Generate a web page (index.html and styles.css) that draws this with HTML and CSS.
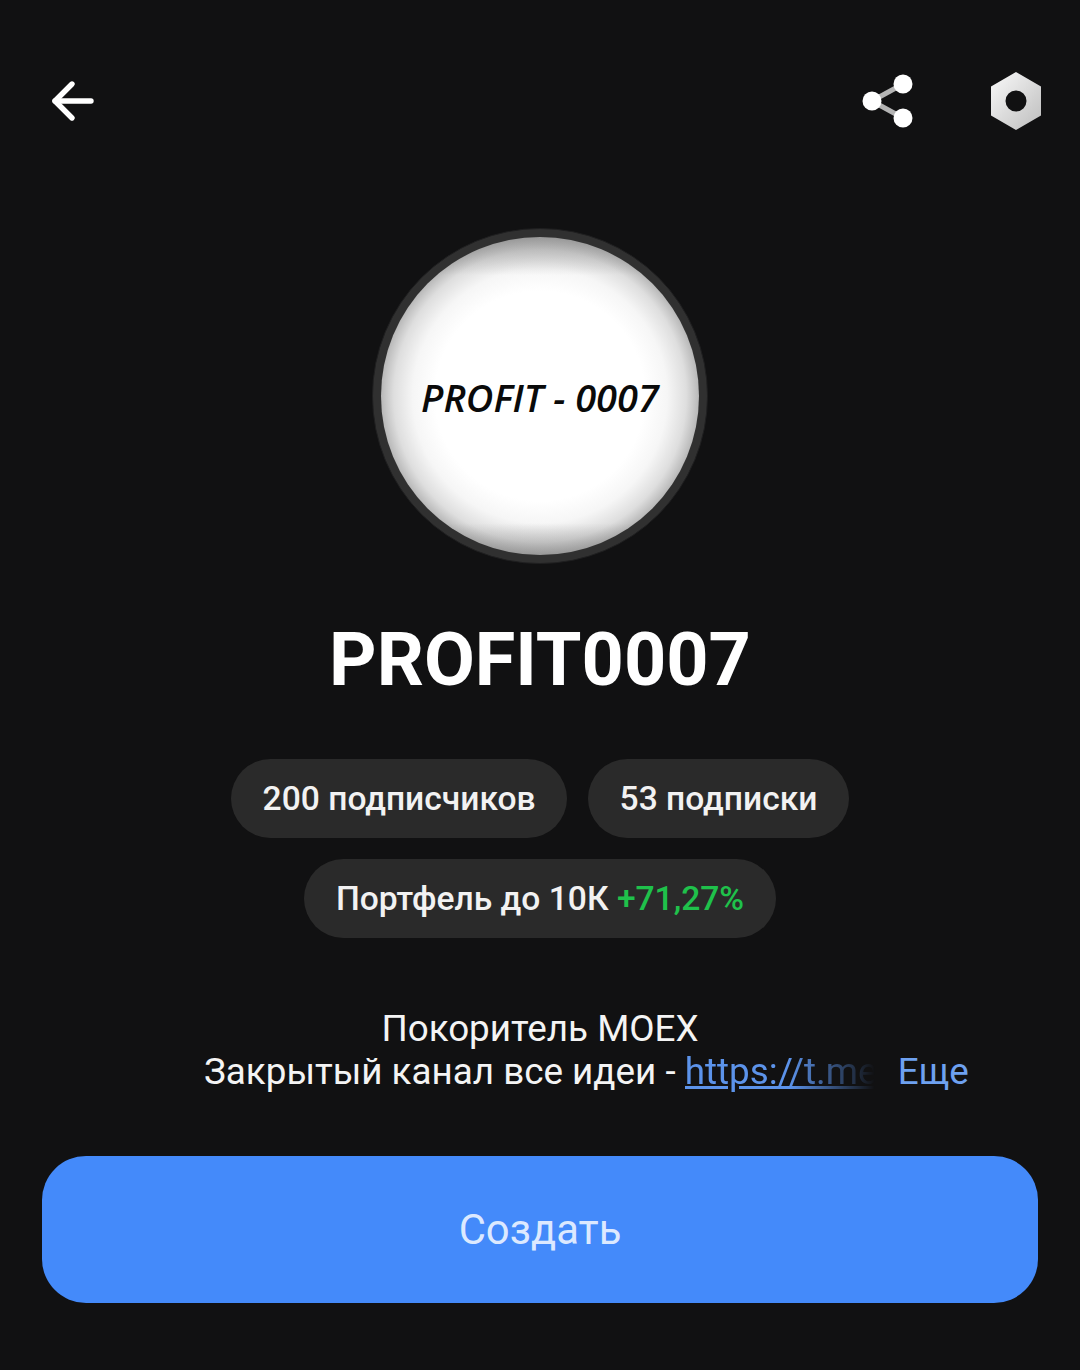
FILE: index.html
```html
<!DOCTYPE html>
<html lang="ru">
<head>
  <meta charset="UTF-8" />
  <title>PROFIT0007</title>
  <link rel="stylesheet" href="styles.css">
</head>
<body>
  <div class="topbar">
    <svg class="icon-back" width="44" height="44" viewBox="0 0 44 44" fill="none" stroke="#fff" stroke-width="5.400" stroke-linecap="round" stroke-linejoin="round">
      <path d="M4 22H40" />
      <path d="M21 5L4 22L21 39" />
    </svg>
    <div class="topbar-right">
      <svg class="icon-share" width="52" height="54" viewBox="0 0 52 54">
        <path d="M10 27L41 10M10 27L41 44" stroke="#b4b4b4" stroke-width="5" />
        <circle cx="10" cy="27" r="9.500" fill="#fff" />
        <circle cx="41" cy="10" r="9.500" fill="#fff" />
        <circle cx="41" cy="44" r="9.500" fill="#fff" />
      </svg>
      <svg class="icon-nut" width="52" height="58" viewBox="0 0 52 58">
        <defs>
          <linearGradient id="nut-fill" x1="0" y1="0" x2="1" y2="1">
            <stop offset="0" stop-color="#fafafa" />
            <stop offset="1" stop-color="#bdbdbd" />
          </linearGradient>
        </defs>
        <path fill="url(#nut-fill)" fill-rule="evenodd" d="M26 0L51 14.500V43.500L26 58L1 43.500V14.500ZM26 18.500A10.500 10.500 0 1 0 26 39.500A10.500 10.500 0 1 0 26 18.500Z" />
      </svg>
    </div>
  </div>

  <div class="avatar-ring">
    <div class="avatar">
      <span class="avatar-text">PROFIT - 0007</span>
    </div>
  </div>

  <h1 class="name">PROFIT0007</h1>

  <div class="chips">
    <div class="chip">200 подписчиков</div>
    <div class="chip">53 подписки</div>
    <div class="chip">Портфель до 10К&nbsp;<span class="gain">+71,27%</span></div>
  </div>

  <div class="about">
    <div class="about-first">Покоритель MOEX</div>
    <div class="about-second">
      <span>Закрытый канал все идеи -&nbsp;</span><a class="about-link">https://t.me</a><span class="more">Еще</span>
    </div>
  </div>

  <button class="create-btn">Создать</button>
</body>
</html>
```

FILE: styles.css
```css
body {
  margin: 0;
  height: 1370px;
  overflow: hidden;
  background-color: #111112;
  color: #fff;
  font-family: Roboto, "Noto Sans", sans-serif;
}
.topbar {
  display: flex;
  justify-content: space-between;
  align-items: center;
  height: 58px;
  padding: 72px 38px 0 51px;
}
.topbar-right {
  display: flex;
  align-items: center;
  gap: 76px;
}
.avatar-ring {
  width: 326px;
  height: 326px;
  margin: 98px auto 0;
  padding: 4px;
  border: 1px solid #1f1f20;
  border-radius: 50%;
  background-color: #303030;
  display: flex;
  align-items: center;
  justify-content: center;
}
.avatar {
  width: 318px;
  height: 318px;
  border-radius: 50%;
  background:
    linear-gradient(to bottom, rgba(120, 120, 120, 0.5) 0, rgba(255, 255, 255, 0) 12%, rgba(255, 255, 255, 0) 90%, rgba(120, 120, 120, 0.5) 100%),
    radial-gradient(circle closest-side, #fff 0%, #fff 66%, #f6f6f6 80%, #dedede 92%, #b8b8b8 100%);
  display: flex;
  align-items: center;
  justify-content: center;
}
.avatar-text {
  padding-top: 2px;
  font-family: "Open Sans", sans-serif;
  font-style: italic;
  font-size: 38px;
  font-weight: 600;
  color: #0a0a0a;
  white-space: nowrap;
}
.name {
  margin: 51px 0 0;
  text-align: center;
  font-size: 73.800px;
  line-height: 90px;
  font-weight: 700;
}
.chips {
  display: flex;
  flex-wrap: wrap;
  justify-content: center;
  gap: 21px;
  width: 700px;
  margin: 54px auto 0;
}
.chip {
  height: 79px;
  line-height: 79px;
  padding: 0 31.500px;
  border-radius: 40px;
  background-color: #2a2a2a;
  color: #f2f2f2;
  font-size: 33.600px;
  font-weight: 500;
  white-space: nowrap;
}
.gain {
  color: #1fc14b;
}
.about {
  margin-top: 69px;
  font-size: 36.800px;
  line-height: 43px;
  color: #f4f4f4;
}
.about-first {
  text-align: center;
}
.about-second {
  display: flex;
  padding-left: 204px;
  white-space: nowrap;
}
.about-link {
  width: 190px;
  color: #5c93ea;
  text-decoration: underline;
  -webkit-mask-image: linear-gradient(to right, #000 55%, transparent 100%);
  mask-image: linear-gradient(to right, #000 55%, transparent 100%);
}
.more {
  margin-left: 23px;
  color: #6ea1f0;
}
.create-btn {
  display: block;
  width: 996px;
  height: 147px;
  margin: 63px 0 0 42px;
  border: none;
  border-radius: 44px;
  background-color: #448afa;
  color: #dce9ff;
  font-family: Roboto, sans-serif;
  font-size: 41.800px;
}
```
